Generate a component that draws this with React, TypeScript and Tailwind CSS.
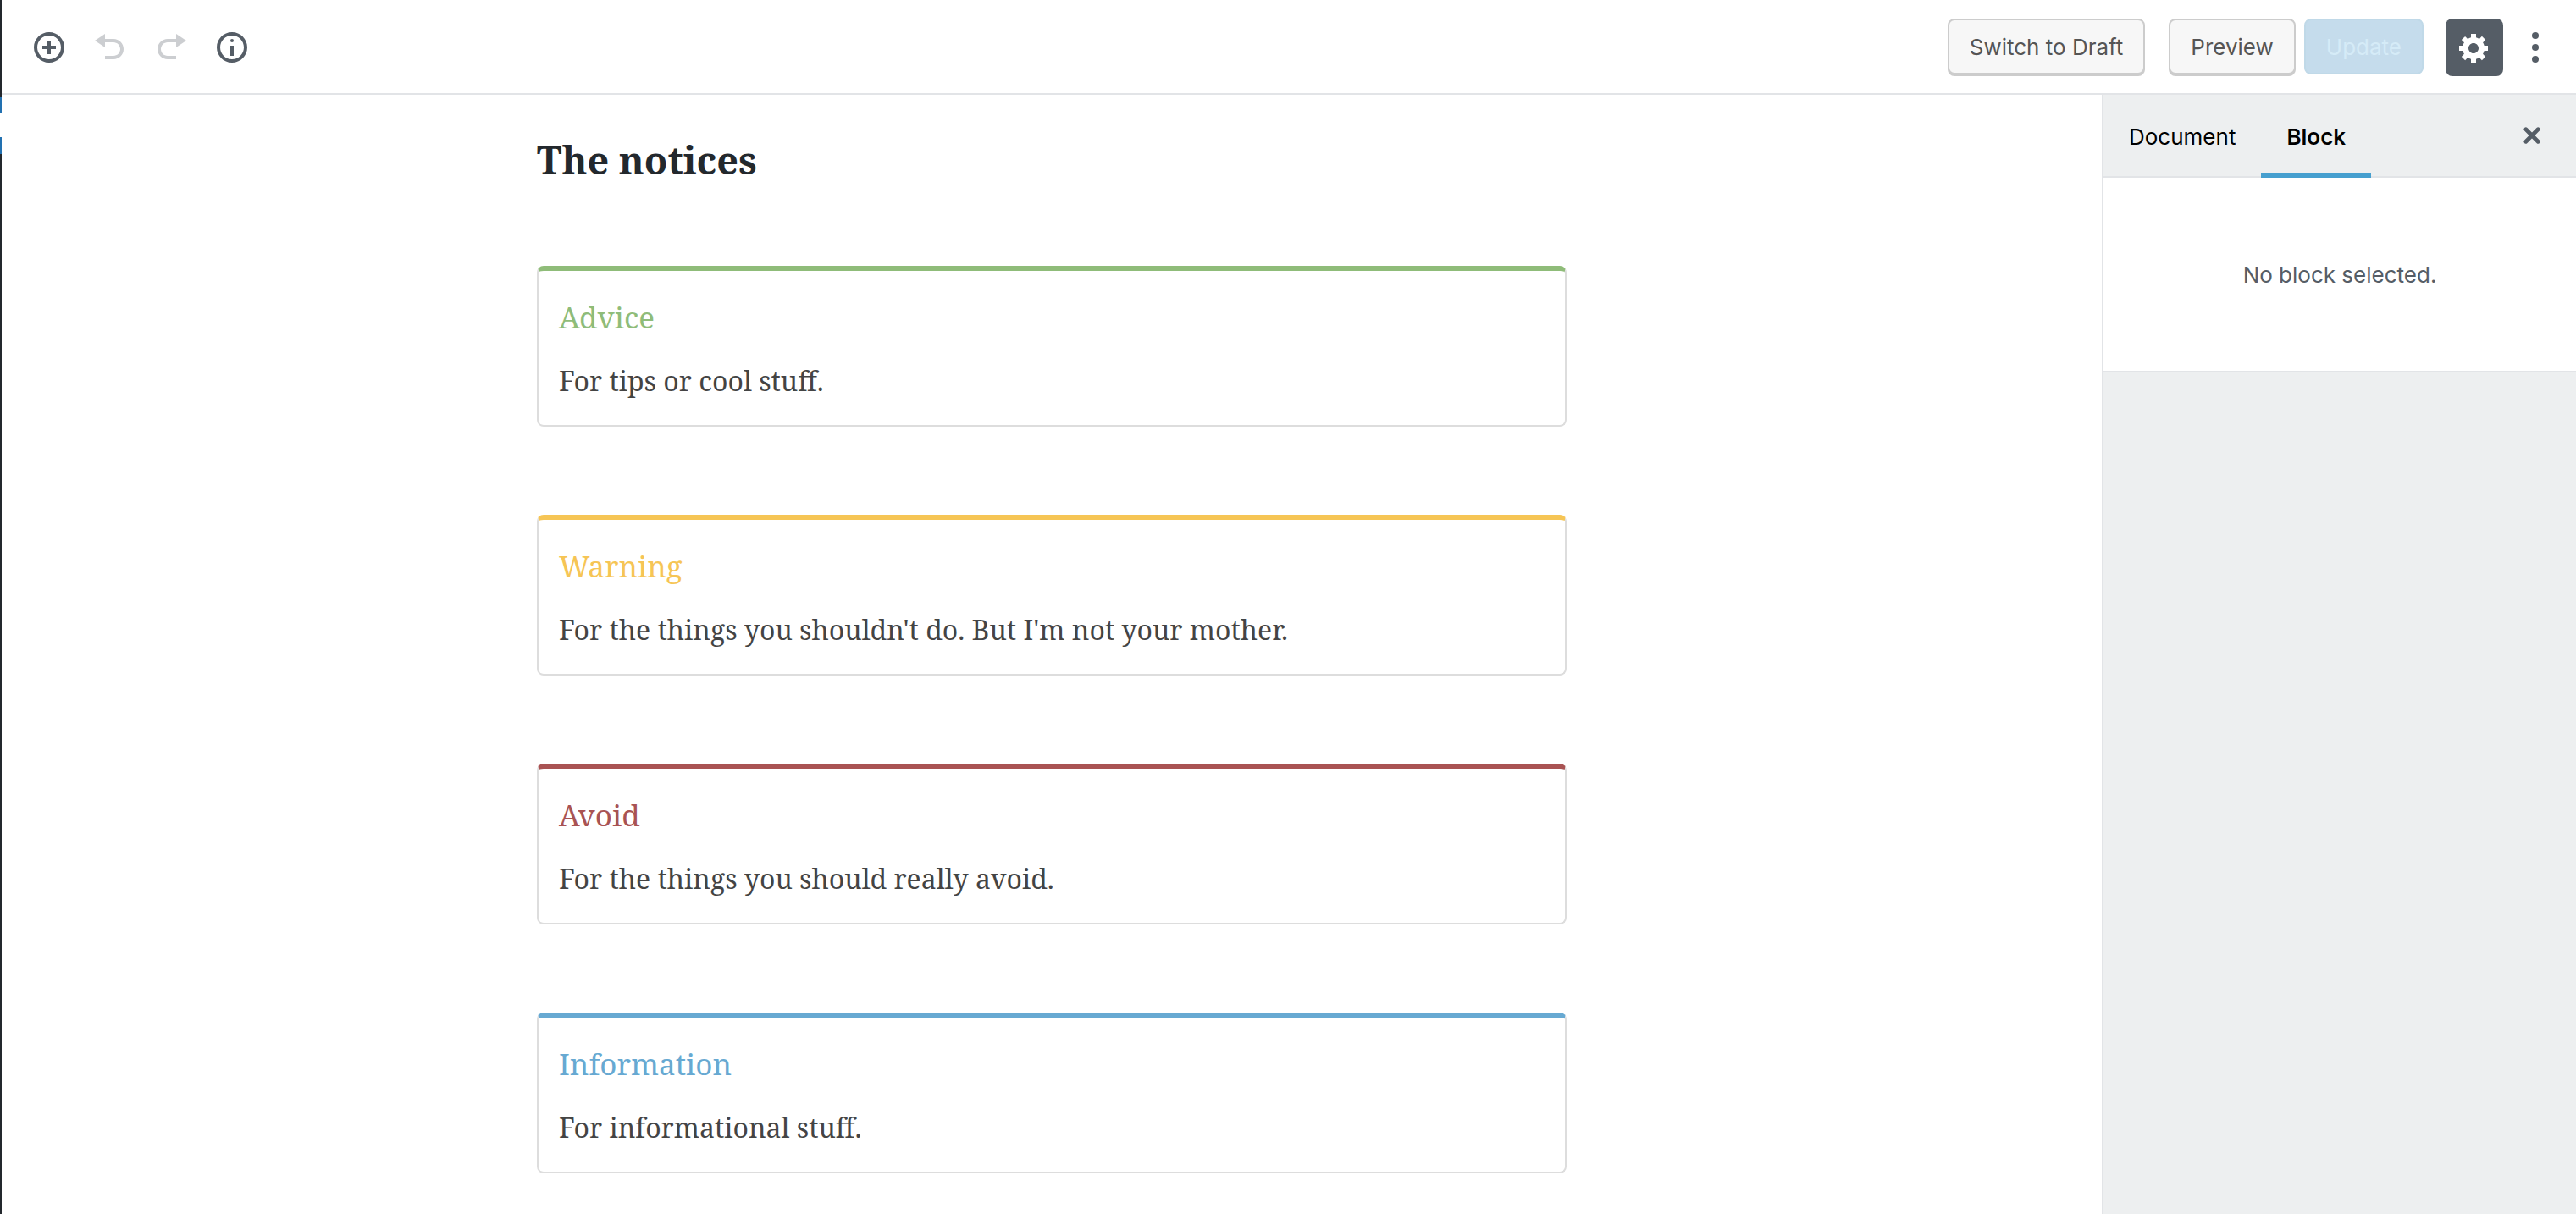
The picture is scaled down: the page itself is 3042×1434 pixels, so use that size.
import type { ReactNode } from "react";

type Notice = {
  title: string;
  text: string;
  border: string;
  color: string;
};

const notices: Notice[] = [
  {
    title: "Advice",
    text: "For tips or cool stuff.",
    border: "border-t-[#8fbc79]",
    color: "text-[#8fbc79]",
  },
  {
    title: "Warning",
    text: "For the things you shouldn't do. But I'm not your mother.",
    border: "border-t-[#f6c555]",
    color: "text-[#f6c555]",
  },
  {
    title: "Avoid",
    text: "For the things you should really avoid.",
    border: "border-t-[#a95353]",
    color: "text-[#a95353]",
  },
  {
    title: "Information",
    text: "For informational stuff.",
    border: "border-t-[#67a9d2]",
    color: "text-[#67a9d2]",
  },
];

function Icon({ children }: { children: ReactNode }) {
  return (
    <svg viewBox="0 0 20 20" className="size-10 fill-current" aria-hidden="true">
      {children}
    </svg>
  );
}

function ToolbarButton({ label, disabled, children }: { label: string; disabled?: boolean; children: ReactNode }) {
  return (
    <button
      type="button"
      aria-label={label}
      disabled={disabled}
      className="flex size-[72px] items-center justify-center text-[#555d66] disabled:text-[#ccced1]"
    >
      {children}
    </button>
  );
}

function Header() {
  return (
    <header className="flex h-28 items-center justify-between border-b-2 border-[#e2e4e7] bg-white pt-0.5 pr-3.5 pl-5">
      <div className="flex" role="toolbar" aria-label="Editor toolbar">
        <ToolbarButton label="Add block">
          <Icon>
            <path d="M10 1c-5 0-9 4-9 9s4 9 9 9 9-4 9-9-4-9-9-9zm0 16c-3.9 0-7-3.1-7-7s3.1-7 7-7 7 3.1 7 7-3.1 7-7 7zm1-11H9v3H6v2h3v3h2v-3h3V9h-3V6z" />
          </Icon>
        </ToolbarButton>
        <ToolbarButton label="Undo" disabled>
          <Icon>
            <path d="M12 5H7V2L1 6l6 4V7h5c2.2 0 4 1.8 4 4s-1.8 4-4 4H7v2h5c3.3 0 6-2.7 6-6s-2.7-6-6-6z" />
          </Icon>
        </ToolbarButton>
        <ToolbarButton label="Redo" disabled>
          <Icon>
            <path d="M8 5h5V2l6 4-6 4V7H8c-2.2 0-4 1.8-4 4s1.8 4 4 4h5v2H8c-3.3 0-6-2.7-6-6s2.7-6 6-6z" />
          </Icon>
        </ToolbarButton>
        <ToolbarButton label="Content structure">
          <Icon>
            <path d="M10 1c-5 0-9 4-9 9s4 9 9 9 9-4 9-9-4-9-9-9zm0 16c-3.9 0-7-3.1-7-7s3.1-7 7-7 7 3.1 7 7-3.1 7-7 7z" />
            <circle cx="10" cy="6" r="1" />
            <path d="M9 9h2v6H9z" />
          </Icon>
        </ToolbarButton>
      </div>
      <div className="flex items-start text-[26px]">
        <button
          type="button"
          className="h-[66px] rounded-lg border-2 border-[#cccccc] bg-[#f7f7f7] px-6 text-[#555555] shadow-[0_2px_0_#cccccc]"
        >
          Switch to Draft
        </button>
        <button
          type="button"
          className="ml-7 h-[66px] rounded-lg border-2 border-[#cccccc] bg-[#f7f7f7] px-6 text-[#555555] shadow-[0_2px_0_#cccccc]"
        >
          Preview
        </button>
        <button
          type="button"
          disabled
          className="ml-2.5 h-[66px] rounded-lg border-2 border-[#c0d9e8] bg-[#c5dcec] px-6 text-[#d5ebf7]"
        >
          Update
        </button>
        <button
          type="button"
          aria-label="Settings"
          aria-pressed="true"
          className="ml-[26px] flex size-[68px] items-center justify-center rounded-lg bg-[#555d66] text-white"
        >
          <Icon>
            <path d="M18 12h-2.18c-.17.7-.44 1.35-.81 1.93l1.54 1.54-2.1 2.1-1.54-1.54c-.58.36-1.23.63-1.91.79V19H8v-2.18c-.68-.16-1.33-.43-1.91-.79l-1.54 1.54-2.12-2.12 1.54-1.54c-.36-.58-.63-1.23-.79-1.91H1V9.03h2.17c.16-.7.44-1.35.8-1.94L2.43 5.55l2.1-2.1 1.54 1.54c.58-.37 1.24-.64 1.93-.81V2h3v2.18c.68.16 1.33.43 1.91.79l1.54-1.54 2.12 2.12-1.54 1.54c.36.59.64 1.24.8 1.94H18V12zm-8.5 1.5c1.66 0 3-1.34 3-3s-1.34-3-3-3-3 1.34-3 3 1.34 3 3 3z" />
          </Icon>
        </button>
        <button
          type="button"
          aria-label="More tools"
          className="ml-1 flex size-[68px] items-center justify-center text-[#555d66]"
        >
          <Icon>
            <circle cx="10" cy="3" r="2" />
            <circle cx="10" cy="10" r="2" />
            <circle cx="10" cy="17" r="2" />
          </Icon>
        </button>
      </div>
    </header>
  );
}

function NoticeCard({ title, text, border, color }: Notice) {
  return (
    <section
      className={`rounded-lg border-2 border-t-[6px] border-[#dddddd] px-6 pt-8 pb-[22px] ${border}`}
    >
      <h3 className={`text-[35px] leading-[46px] ${color}`}>{title}</h3>
      <p className="mt-[22px] text-[32px] leading-[60px] text-[#444444]">{text}</p>
    </section>
  );
}

function Sidebar() {
  return (
    <aside className="flex w-[560px] shrink-0 flex-col border-l-2 border-[#e2e4e7] bg-[#edeff0] text-[26px]">
      <div className="flex h-[98px] items-stretch border-b-2 border-[#e2e4e7] text-black">
        <div role="tablist" className="-mb-0.5 flex">
          <button type="button" role="tab" aria-selected="false" className="px-[30px]">
            Document
          </button>
          <button
            type="button"
            role="tab"
            aria-selected="true"
            className="px-[30px] font-semibold shadow-[inset_0_-6px_0_#469fcf]"
          >
            Block
          </button>
        </div>
        <button
          type="button"
          aria-label="Close settings"
          className="mr-2 ml-auto flex w-[88px] items-center justify-center text-[#555d66]"
        >
          <Icon>
            <path
              d="M6.4 6.4l7.2 7.2M13.6 6.4l-7.2 7.2"
              className="stroke-current"
              strokeWidth="2.4"
              strokeLinecap="round"
            />
          </Icon>
        </button>
      </div>
      <p className="flex h-[230px] items-center justify-center border-b-2 border-[#e2e4e7] bg-white text-[#555d66]">
        No block selected.
      </p>
    </aside>
  );
}

export default function App() {
  return (
    <div className="flex min-h-screen bg-white font-['Inter',sans-serif]">
      {/* Sliver of the admin menu, with the arrow of its current item */}
      <div className="flex w-0.5 shrink-0 flex-col bg-[#23282d]">
        <div className="mt-[114px] h-5 bg-[#2271b1]" />
        <div className="h-7 bg-white" />
        <div className="h-5 bg-[#2271b1]" />
      </div>
      <div className="flex min-w-0 flex-1 flex-col">
        <Header />
        <div className="flex flex-1">
          <main className="min-w-0 flex-1 pt-12 pb-12 font-['Noto_Serif',serif]">
            <div className="mx-auto max-w-[1216px]">
              <h2 className="mb-24 text-[45px] leading-[58px] font-bold text-[#23282d]">The notices</h2>
              <div className="flex flex-col gap-[104px]">
                {notices.map((notice) => (
                  <NoticeCard key={notice.title} {...notice} />
                ))}
              </div>
            </div>
          </main>
          <Sidebar />
        </div>
      </div>
    </div>
  );
}
